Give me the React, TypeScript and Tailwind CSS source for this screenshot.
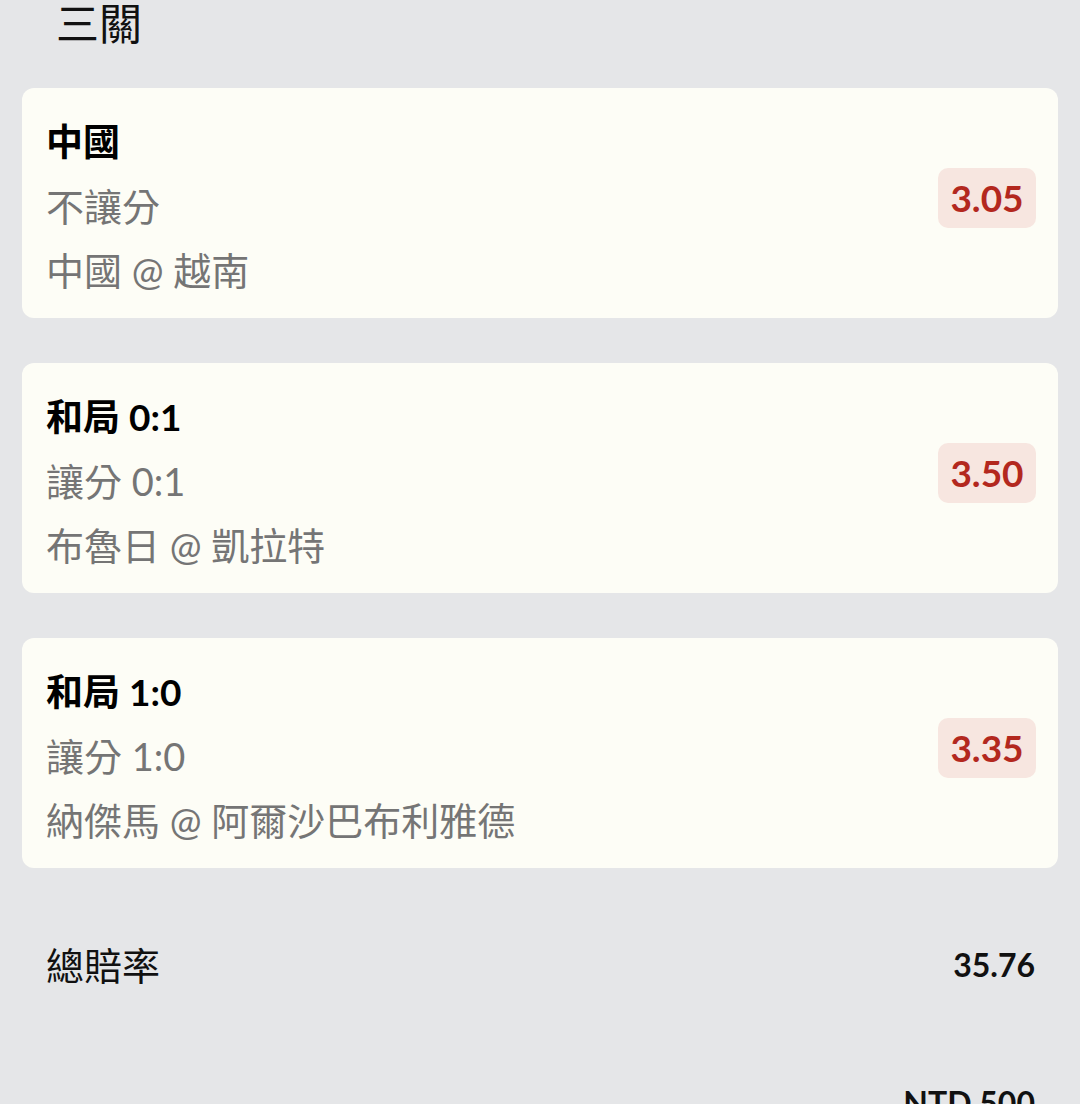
import React from "react";

const font = { fontFamily: 'Lato, "Noto Sans CJK TC", sans-serif' };

type Bet = { title: string; type: string; match: string; odds: string };

const bets: Bet[] = [
  { title: "中國", type: "不讓分", match: "中國 @ 越南", odds: "3.05" },
  { title: "和局 0:1", type: "讓分 0:1", match: "布魯日 @ 凱拉特", odds: "3.50" },
  { title: "和局 1:0", type: "讓分 1:0", match: "納傑馬 @ 阿爾沙巴布利雅德", odds: "3.35" },
];

function Card({ bet }: { bet: Bet }) {
  return (
    <div className="flex items-center justify-between rounded-[12px] bg-[#fdfdf6] pl-[24px] pr-[22px] pt-[22px] pb-[16px]">
      <div className="flex flex-col">
        <div className="text-[37px] leading-[64px] font-bold text-black">{bet.title}</div>
        <div className="text-[38px] leading-[64px] text-[#757575]">{bet.type}</div>
        <div className="text-[38px] leading-[64px] text-[#757575]">{bet.match}</div>
      </div>
      <div className="mb-[16px] flex h-[60px] w-[98px] items-center justify-center rounded-[10px] bg-[#f7e6e0] text-[37px] font-bold text-[#b3281e]">
        {bet.odds}
      </div>
    </div>
  );
}

export default function App() {
  return (
    <div style={font} className="h-[1104px] w-[1080px] overflow-hidden bg-[#e5e6e8]">
      <div className="pl-[56px] pt-[2px] text-[43px] leading-[44px] text-[#111]">三關</div>
      <div className="mt-[42px] flex flex-col gap-[45px] px-[22px]">
        {bets.map((b) => (
          <Card key={b.odds} bet={b} />
        ))}
      </div>
      <div className="mt-[72px] flex items-center justify-between pl-[46px] pr-[45px]">
        <div className="text-[38px] leading-[50px] text-[#111]">總賠率</div>
        <div className="text-[32px] leading-[50px] font-bold text-[#111]">35.76</div>
      </div>
      <div className="mt-[88px] flex justify-end pr-[45px]">
        <div className="text-[32px] leading-[50px] font-bold text-[#111]">NTD 500</div>
      </div>
    </div>
  );
}
